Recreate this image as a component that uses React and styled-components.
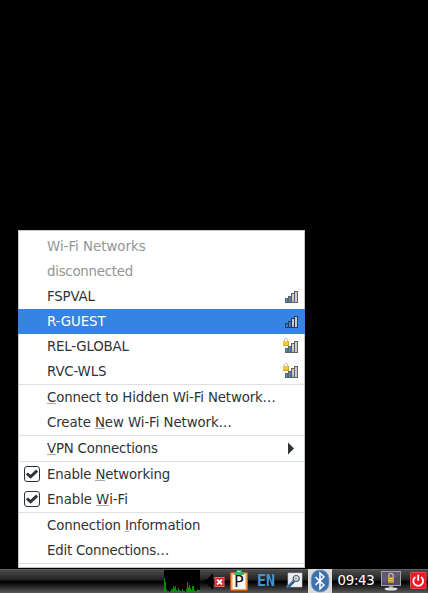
import React from 'react';
import styled, { createGlobalStyle } from 'styled-components';

const GlobalStyle = createGlobalStyle`
  * { box-sizing: border-box; }
  body { margin: 0; background: #000; overflow: hidden; }
  svg { display: block; flex: none; overflow: visible; }
`;

const Desktop = styled.div`
  width: 428px;
  height: 593px;
  display: flex;
  flex-direction: column;
  justify-content: flex-end;
  background: #000;
  font-family: 'DejaVu Sans', sans-serif;
`;

const Menu = styled.div`
  width: 287px;
  height: 338px;
  margin: 0 0 1px 18px;
  padding: 3px 0;
  background: #fff;
  border: 1px solid #c9c5c1;
`;

const Row = styled.div`
  height: 25px;
  margin: 0 -1px;
  display: grid;
  grid-template-columns: 29px 1fr 22px;
  align-items: center;
  font-size: 13.33px;
  line-height: 25px;
  letter-spacing: ${(p) => p.$track || 0}px;
  white-space: nowrap;
  color: ${(p) => (p.$active ? '#fff' : p.$muted ? '#929595' : '#2e3436')};
  background: ${(p) => (p.$active ? '#3584e4' : 'transparent')};
`;

const Separator = styled.div`
  height: 1px;
  background: #e1e0df;
`;

const Mnemonic = styled.span`
  display: inline-block;
  height: 13px;
  line-height: 13px;
  background: linear-gradient(#a6a9aa, #a6a9aa) 0 100% / 100% 1px no-repeat;
`;

const CheckBox = styled.span`
  width: 16px;
  height: 16px;
  margin: -2px 0 0 6px;
  border: 1px solid #2e3436;
  border-radius: 3px;
  display: flex;
  align-items: center;
  justify-content: center;
`;

const Taskbar = styled.div`
  height: 24px;
  padding-left: 164px;
  display: flex;
  align-items: center;
  background: linear-gradient(#707070 0, #4c4c4c 1px, #202020 11px, #000 12px, #080808 14px, #585858 24px);
`;

const TrayItem = styled.div`
  width: ${(p) => p.$w}px;
  height: 24px;
  margin-left: ${(p) => p.$gap || 0}px;
  flex: none;
  display: flex;
  align-items: center;
  justify-content: center;
  background: ${(p) => p.$bg || 'transparent'};
`;

const Language = styled(TrayItem)`
  font: bold 15px 'DejaVu Sans Mono', monospace;
  color: #4695d1;
`;

const Clock = styled(TrayItem)`
  font-size: 13.33px;
  letter-spacing: -0.3px;
  color: #fff;
  padding-bottom: 2px;
`;

const Signal = ({ locked, active }) => {
  const edge = active ? '#1d3c68' : '#5d626a';
  return (
    <svg width="16" height="16" viewBox="0 0 16 16" shapeRendering="crispEdges">
      <path d="M2 9h3v5H2zM5 7h3v7H5zM8 4h3v10H8zM11 2h4v12h-4z" fill={edge} />
      <path d="M3 10h2v3H3zM6 8h2v5H6z" fill="#3d6cab" />
      <path d="M3 10h1v3H3zM6 8h1v5H6z" fill={active ? '#4c82cb' : '#6790c6'} />
      <path d="M9 5h2v8H9zM12 3h2v10h-2z" fill="#cbcbc8" />
      <path d="M9 11h2v2H9z" fill="#b4b9c0" />
      {locked && (
        <g>
          <path d="M1 3V0h1v-1h2v1h1v3H4V0H2v3z" fill="#bfc2c2" />
          <path d="M0 2h6v5H0z" fill="#d0a31d" />
          <path d="M0 2h5v4H0z" fill="#f3c63c" />
        </g>
      )}
    </svg>
  );
};

const Tick = () => (
  <svg width="14" height="12" viewBox="0 0 14 12">
    <path d="M1.9 5.5 5.6 8.8 12.1 2.6" fill="none" stroke="#2e3436" strokeWidth="3" />
  </svg>
);

const Arrow = () => (
  <svg width="12" height="12" viewBox="0 0 12 12">
    <path d="M5-.5 11 5.5 5 11.5z" fill="#2e3436" />
  </svg>
);

const LOAD = [14, 10, 3, 1, 1, 0, 1, 3, 3, 6, 4, 6, 2, 1, 4, 2, 1, 1, 3, 1, 1, 0, 3, 10, 5, 7, 4, 2, 6, 6, 2, 1, 1, 3, 2, 2];

const LoadGraph = () => (
  <svg width="36" height="24" viewBox="0 0 36 24" shapeRendering="crispEdges">
    <path d="M0 1h36v22H0z" fill="#000" />
    {LOAD.map((v, i) => (
      <rect key={i} x={i} y={23 - v} width="1" height={v} fill="#009000" />
    ))}
  </svg>
);

const MutedSpeaker = () => (
  <svg width="21" height="24" viewBox="0 0 21 24">
    <path d="M0 10.5h2L8 4v17l-6-6.5H0z" fill="#000" />
    <rect x="10" y="8.5" width="9" height="9" fill="#cf1f24" stroke="#ef6664" />
    <path d="m12 10.5 5 5m0-5-5 5" stroke="#fff" strokeWidth="1.9" />
  </svg>
);

const ClipLetter = styled.text`
  font: 16px 'DejaVu Sans', sans-serif;
  fill: #111;
`;

const Clipboard = () => (
  <svg width="18" height="24" viewBox="0 0 18 24">
    <rect x="0.5" y="3.5" width="17" height="18" rx="1" fill="#f09a4a" stroke="#c9590e" />
    <path d="M2.5 5h13v15h-13z" fill="#f4f8fa" />
    <path d="M4 6V4l2-1 1-2h4l1 2 2 1v2z" fill="#38b667" />
    <path d="M7.5 2.5h3" stroke="#b0ecbd" />
    <ClipLetter x="4" y="18">P</ClipLetter>
  </svg>
);

const Search = () => (
  <svg width="18" height="24" viewBox="0 0 18 24">
    <path d="M3 4h14v14H3z" fill="#edf0f3" stroke="#c3c8cd" strokeWidth=".6" />
    <path d="M2 19 9 12" stroke="#295782" strokeWidth="3" />
    <path d="m1.5 18 7-6.6" stroke="#79a7d1" />
    <circle cx="11.2" cy="9.5" r="3" fill="#d9e5ef" stroke="#505962" strokeWidth="1.2" />
    <path d="M10 8.5h2v2h-2z" fill="#92a9bd" />
  </svg>
);

const Bluetooth = () => (
  <svg width="24" height="24" viewBox="0 0 24 24">
    <rect x="3.2" y="1" width="17.8" height="22" rx="8.5" fill="#3c72b0" stroke="#7799bf" strokeWidth=".7" />
    <path d="m7.5 8.1 8.5 7.9-4 4v-16l4 4-8.5 7.9" fill="none" stroke="#fff" strokeWidth="1.5" />
  </svg>
);

const LockedScreen = () => (
  <svg width="20" height="24" viewBox="0 0 20 24">
    <rect x=".5" y="2.5" width="19" height="14" fill="#514b70" stroke="#a4a1ac" />
    <path d="M1 3h18v4L1 14z" fill="#706889" opacity=".45" />
    <path d="M7.8 9V6.6c0-3 4.4-3 4.4 0V9" fill="none" stroke="#c8bc99" strokeWidth="1.3" />
    <path d="M7 8h6v6H7z" fill="#c5982e" />
    <path d="M7.5 9.5h5m-5 2h5" stroke="#ead073" strokeWidth=".7" />
    <path d="M8 17h4v3H8z" fill="#999" />
    <ellipse cx="10" cy="20" rx="6.5" ry="1.6" fill="#dedede" />
  </svg>
);

const Power = () => (
  <svg width="18" height="24" viewBox="0 0 18 24">
    <rect x="1.5" y="3.5" width="15.5" height="16" rx="1" fill="#e31c23" stroke="#f0494b" />
    <path d="M6.4 7.9a4.9 4.9 0 1 0 5.6 0" fill="none" stroke="#fff" strokeWidth="1.8" />
    <path d="M9.2 5.7v6" stroke="#fff" strokeWidth="1.8" />
  </svg>
);

const Checked = () => (
  <CheckBox>
    <Tick />
  </CheckBox>
);

const Item = ({ lead, children, trail, ...flags }) => (
  <Row {...flags}>
    <span>{lead}</span>
    <span>{children}</span>
    <span>{trail}</span>
  </Row>
);

export default function App() {
  return (
    <Desktop>
      <GlobalStyle />
      <Menu>
        <Item $muted>Wi-Fi Networks</Item>
        <Item $muted $track={-0.25}>disconnected</Item>
        <Item $track={-0.15} trail={<Signal />}>FSPVAL</Item>
        <Item $active $track={-0.1} trail={<Signal active />}>R-GUEST</Item>
        <Item $track={-0.2} trail={<Signal locked />}>REL-GLOBAL</Item>
        <Item $track={-0.15} trail={<Signal locked />}>RVC-WLS</Item>
        <Separator />
        <Item $track={-0.15}><Mnemonic>C</Mnemonic>onnect to Hidden Wi-Fi Network…</Item>
        <Item $track={-0.08}>Create <Mnemonic>N</Mnemonic>ew Wi-Fi Network…</Item>
        <Separator />
        <Item $track={-0.2} trail={<Arrow />}><Mnemonic>V</Mnemonic>PN Connections</Item>
        <Separator />
        <Item $track={-0.17} lead={<Checked />}>Enable <Mnemonic>N</Mnemonic>etworking</Item>
        <Item $track={-0.08} lead={<Checked />}>Enable <Mnemonic>W</Mnemonic>i-Fi</Item>
        <Separator />
        <Item $track={-0.16}>Connection <Mnemonic>I</Mnemonic>nformation</Item>
        <Item $track={-0.22}>Edit Connections…</Item>
        <Separator />
      </Menu>
      <Taskbar>
        <TrayItem $w={36}><LoadGraph /></TrayItem>
        <TrayItem $w={21} $gap={5}><MutedSpeaker /></TrayItem>
        <TrayItem $w={18} $gap={4}><Clipboard /></TrayItem>
        <Language $w={20} $gap={8}>EN</Language>
        <TrayItem $w={18} $gap={9}><Search /></TrayItem>
        <TrayItem $w={24} $gap={5} $bg="#deddda"><Bluetooth /></TrayItem>
        <Clock $w={38} $gap={5}>09:43</Clock>
        <TrayItem $w={20} $gap={6}><LockedScreen /></TrayItem>
        <TrayItem $w={18} $gap={8}><Power /></TrayItem>
      </Taskbar>
    </Desktop>
  );
}
